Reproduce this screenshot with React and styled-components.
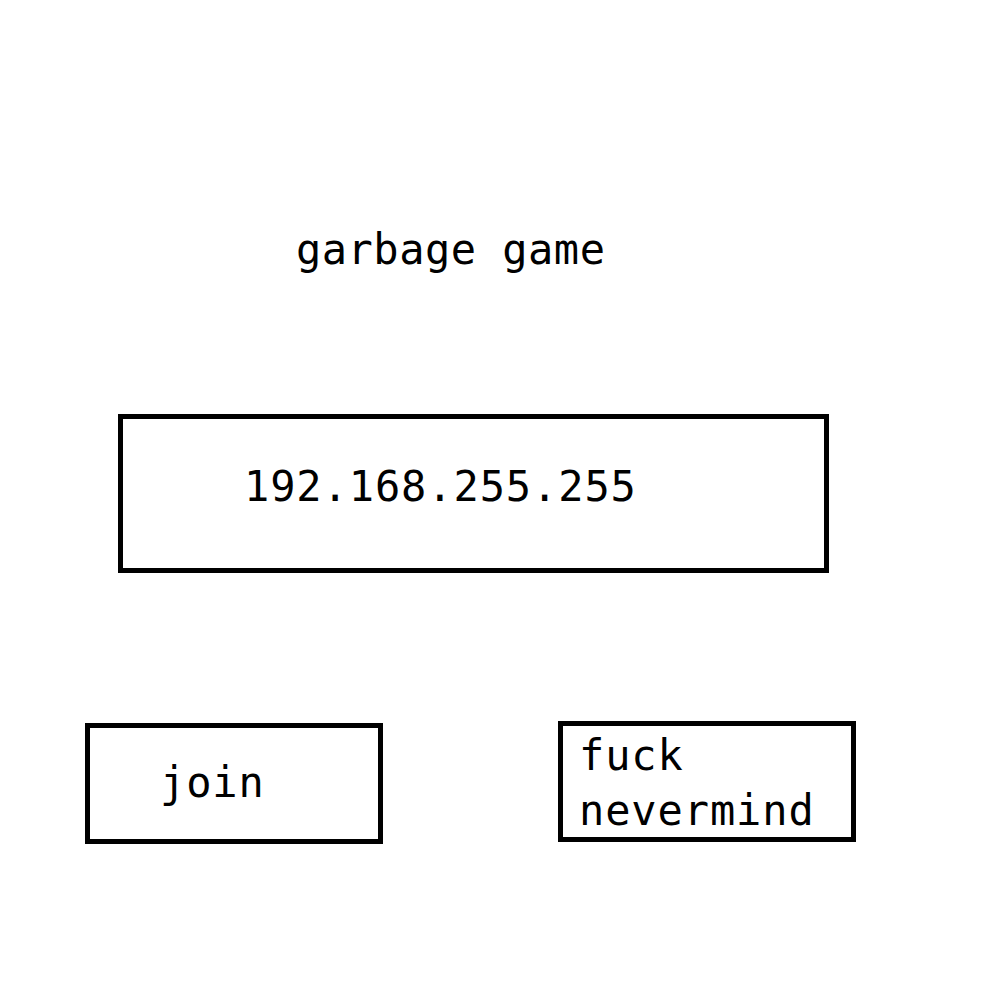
import styled, { createGlobalStyle } from 'styled-components';

const GlobalStyle = createGlobalStyle`
  html, body {
    margin: 0;
    background: #fff;
  }
  body {
    font-family: 'DejaVu Sans Mono', 'Liberation Mono', monospace;
    color: #000;
  }
`;

const Screen = styled.main`
  width: 1000px;
  height: 1000px;
  display: flex;
  flex-direction: column;
  align-items: flex-start;
  font-size: 42px;
  letter-spacing: 0.9px;
  line-height: 56px;
`;

const Title = styled.h1`
  margin: 222px 0 0 296px;
  font: inherit;
  letter-spacing: 0.5px;
  white-space: nowrap;
`;

const AddressBox = styled.div`
  box-sizing: border-box;
  margin: 136px 0 0 118px;
  width: 711px;
  height: 159px;
  padding: 40px 0 0 121px;
  border: 5px solid #000;
`;

const Actions = styled.div`
  display: flex;
  align-items: flex-start;
  gap: 175px;
  margin: 148px 0 0 85px;
`;

const Button = styled.button`
  box-sizing: border-box;
  display: flex;
  flex-direction: column;
  align-items: flex-start;
  justify-content: flex-start;
  width: ${({ $width }) => $width}px;
  height: ${({ $height }) => $height}px;
  margin-top: ${({ $offset }) => $offset || 0}px;
  padding: ${({ $pad }) => $pad};
  border: 5px solid #000;
  background: #fff;
  color: #000;
  font: inherit;
  letter-spacing: inherit;
  line-height: ${({ $lh }) => $lh || 56}px;
  text-align: left;
  cursor: pointer;
`;

const App = () => {
  return (
    <>
      <GlobalStyle />
      <Screen>
        <Title>garbage game</Title>
        <AddressBox>192.168.255.255</AddressBox>
        <Actions>
          <Button $width={298} $height={121} $offset={2} $pad="27px 0 0 70px">
            <span>join</span>
          </Button>
          <Button $width={298} $height={121} $pad="2px 0 0 16px" $lh={55}>
            <span>fuck</span>
            <span>nevermind</span>
          </Button>
        </Actions>
      </Screen>
    </>
  );
};

export default App;
